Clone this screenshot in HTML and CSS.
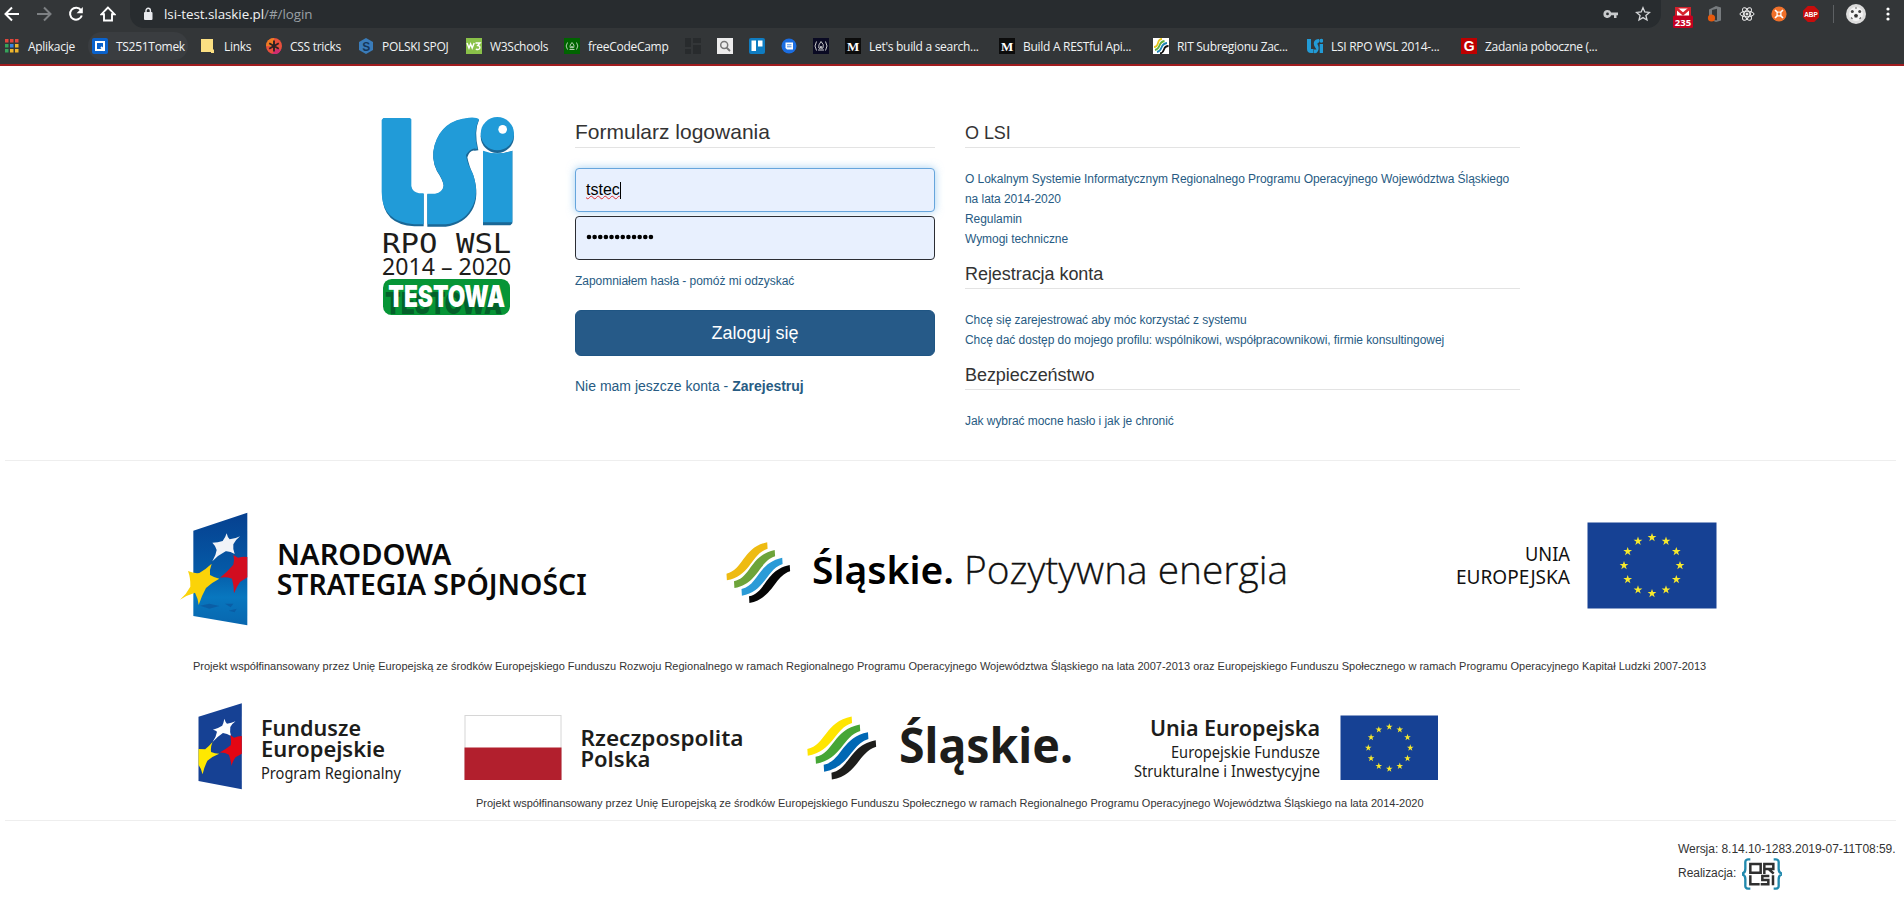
FILE: index.html
```html
<!DOCTYPE html>
<html lang="pl">
<head>
<meta charset="utf-8">
<title>LSI RPO WSL 2014-2020</title>
<link rel="stylesheet" href="styles.css">
</head>
<body>
<svg class="defs" width="0" height="0" aria-hidden="true">
  <defs>
    <path id="star" d="M0-4.600 1.100-1.400 4.400-1.400 1.700.6 2.700 3.800 0 1.800-2.700 3.800-1.700.6-4.400-1.400-1.100-1.400Z"/>
    <g id="ring">
      <use href="#star" x="0" y="-28"/><use href="#star" x="14" y="-24.3"/><use href="#star" x="24.3" y="-14"/>
      <use href="#star" x="28" y="0"/><use href="#star" x="24.3" y="14"/><use href="#star" x="14" y="24.3"/>
      <use href="#star" x="0" y="28"/><use href="#star" x="-14" y="24.3"/><use href="#star" x="-24.3" y="14"/>
      <use href="#star" x="-28" y="0"/><use href="#star" x="-24.3" y="-14"/><use href="#star" x="-14" y="-24.3"/>
    </g>
    <path id="wave" d="M67 191C110 180 108 112 170 97L171 116C130 131 128 198 68 211Z"/>
  </defs>
</svg>

<header class="browser">
  <div class="toolbar">
    <span class="slot"><svg width="16" height="16" viewBox="0 0 16 16"><path d="M15 8H2M8 1.5 1.5 8 8 14.5" fill="none" stroke="#fff" stroke-width="2"/></svg></span>
    <span class="slot"><svg width="16" height="16" viewBox="0 0 16 16"><path d="M1 8h13M8 1.5 14.5 8 8 14.5" fill="none" stroke="#7d8083" stroke-width="2"/></svg></span>
    <span class="slot"><svg width="16" height="16" viewBox="0 0 16 16"><path d="M13 4.2A6 6 0 1 0 13.8 9.500" fill="none" stroke="#fff" stroke-width="2"/><path d="M14.800 1v6.200H8.600Z" fill="#fff"/></svg></span>
    <span class="slot"><svg width="16" height="16" viewBox="0 0 16 16"><path d="M8 1.500 1.500 8.200H4V14.500h8V8.200h2.500Z" fill="none" stroke="#fff" stroke-width="1.900"/></svg></span>
    <div class="omnibox">
      <svg class="lock" width="10" height="14" viewBox="0 0 10 14"><rect x="1" y="5" width="8.500" height="8" rx="1" fill="#e8eaed"/><path d="M3 6V3.500a2.200 2.200 0 0 1 4.400 0V6" fill="none" stroke="#e8eaed" stroke-width="1.400"/></svg>
      <span class="url">lsi-test.slaskie.pl<span class="path">/#/login</span></span>
      <span class="slot push"><svg width="16" height="16" viewBox="0 0 16 16"><path d="M4.500 4a4 4 0 1 0 3.700 5.300H11V12h2.500V9.300H15V6.400H8.200A4 4 0 0 0 4.500 4Zm0 2.500a1.400 1.400 0 1 1 0 2.800 1.400 1.400 0 0 1 0-2.800Z" fill="#c8cacc" fill-rule="evenodd"/></svg></span>
      <span class="slot"><svg width="16" height="16" viewBox="0 0 16 16"><path d="M8 1.700 9.800 6l4.700.4-3.600 3 1.100 4.600L8 11.600 4 14l1.100-4.600-3.600-3L6.200 6Z" fill="none" stroke="#d5d7d9" stroke-width="1.300"/></svg></span>
    </div>
    <span class="slot mail"><svg width="22" height="21" viewBox="0 0 22 21"><rect x="3" y="0" width="16" height="10" fill="#d0202b"/><path d="M5 1.500h12V9H5Z" fill="#fff"/><path d="M4 1 11 7l7-6" fill="none" stroke="#d8232e" stroke-width="2.600"/><rect x="1" y="8.500" width="20" height="12.500" rx="1.500" fill="#c4001f"/><text x="11" y="18.500" text-anchor="middle" class="count">235</text></svg></span>
    <span class="slot"><svg width="16" height="18" viewBox="0 0 16 18"><path d="M2 4.500 9 1l5 1.500v13L9 17l-5-2 6 .2V3.800L5 5v6H2Z" fill="#777b7e"/><circle cx="4.500" cy="13" r="3.600" fill="#e8590c"/></svg></span>
    <span class="slot"><svg width="16" height="16" viewBox="0 0 16 16" fill="none" stroke="#eee" stroke-width="1"><ellipse cx="8" cy="8" rx="7" ry="2.800"/><ellipse cx="8" cy="8" rx="7" ry="2.800" transform="rotate(60 8 8)"/><ellipse cx="8" cy="8" rx="7" ry="2.800" transform="rotate(120 8 8)"/><circle cx="8" cy="8" r="1" fill="#eee"/></svg></span>
    <span class="slot"><svg width="16" height="16" viewBox="0 0 16 16"><circle cx="8" cy="8" r="7.600" fill="#f0702a"/><path d="m4 4 8 8M12 4l-8 8" stroke="#fff" stroke-width="1.600"/><circle cx="8" cy="8" r="2.600" fill="#fff"/><circle cx="8" cy="8" r="1.400" fill="#f0702a"/></svg></span>
    <span class="slot"><svg width="16" height="16" viewBox="0 0 16 16"><path d="M4.800 0h6.400L16 4.800v6.400L11.200 16H4.800L0 11.200V4.800Z" fill="#c70d0c"/><text x="1.200" y="10.800" class="abp" textLength="13.600" lengthAdjust="spacingAndGlyphs">ABP</text></svg></span>
    <span class="rule"></span>
    <span class="slot wide"><svg width="20" height="20" viewBox="0 0 20 20"><circle cx="10" cy="10" r="10" fill="#dcdcdc"/><circle cx="10" cy="10" r="7" fill="#f4f4f4"/><path d="m8 11 2-1.300 2 1.300-.7 2.500H8.700Z" fill="#333"/><circle cx="6.300" cy="7.500" r="1.500" fill="#444"/><circle cx="13.700" cy="7.500" r="1.500" fill="#444"/><path d="M5 13.500l1.500 1.500M15 13.500l-1.500 1.500M9 4h2" stroke="#666" stroke-width="1.200"/></svg></span>
    <span class="slot menu"><svg width="4" height="16" viewBox="0 0 4 16" fill="#fff"><circle cx="2" cy="3" r="1.600"/><circle cx="2" cy="8" r="1.600"/><circle cx="2" cy="13" r="1.600"/></svg></span>
  </div>
  <nav class="bookmarks">
    <a><svg width="16" height="16" viewBox="0 0 16 16"><path d="M1 1h3.500v3.500H1zM6 1h3.500v3.500H6zM11 1h3.500v3.500H11z" fill="#e0473c"/><path d="M1 6h3.500v3.500H1z" fill="#35a35a"/><path d="M6 6h3.500v3.500H6z" fill="#3b83e0"/><path d="M11 6h3.500v3.500H11zM11 11h3.500v3.500H11zM6 11h3.500v3.500H6z" fill="#eeb52c"/><path d="M1 11h3.500v3.500H1z" fill="#35a35a"/></svg><span>Aplikacje</span></a>
    <a class="hover"><svg width="16" height="16" viewBox="0 0 16 16"><rect width="16" height="16" rx="2" fill="#0a62cc"/><path d="M4 4h8v8H4ZM9 9l3.500 3.500" fill="none" stroke="#fff" stroke-width="2"/></svg><span>TS251Tomek</span></a>
    <a><svg width="16" height="16" viewBox="0 0 16 16"><path d="M1 1h12v10l1 1v3H11V14H1Z" fill="#fbdf82"/></svg><span>Links</span></a>
    <a><svg width="16" height="16" viewBox="0 0 16 16"><circle cx="8" cy="8" r="8" fill="#e8503c"/><path d="M8 0a8 8 0 0 0-8 8l8 0Z" fill="#ee7d22"/><path d="M15 12a8 8 0 0 1-9 4l5-6Z" fill="#d02c70"/><path d="M8 2.500v11M3.200 5.200l9.600 5.600M12.800 5.200l-9.600 5.600" stroke="#2d2224" stroke-width="1.900"/></svg><span>CSS tricks</span></a>
    <a><svg width="16" height="16" viewBox="0 0 16 16"><path d="m8 0 7 4v8l-7 4-7-4V4Z" fill="#3a7cba"/><text x="8" y="12.500" text-anchor="middle" class="spoj">S</text></svg><span>POLSKI SPOJ</span></a>
    <a><svg width="16" height="16" viewBox="0 0 16 16"><rect width="16" height="16" fill="#8ac149"/><path d="m1 5 2 5 1.600-4L6.200 10l2-5M9.500 5h4.500l-2.200 2.500q2.600.3 2 2.800-1 2-4 .8" fill="none" stroke="#fff" stroke-width="1.400"/></svg><span>W3Schools</span></a>
    <a><svg width="16" height="16" viewBox="0 0 16 16"><rect width="16" height="16" fill="#006400"/><path d="M3.500 4.500Q.8 8 3.500 11.500M12.500 4.500q2.700 3.500 0 7M5.500 11.500h5M8 4.500q3 2.500 1.800 5L8.600 10 8 8l-.8 2-1.200-.5Q5.500 7 8 4.500Z" fill="none" stroke="#c4dcc0" stroke-width=".9"/></svg><span>freeCodeCamp</span></a>
    <a><svg width="16" height="16" viewBox="0 0 16 16" fill="#282b2d"><path d="M0 0h6v9H0zM8 0h8v5H8zM0 11h6v5H0zM8 7h8v9H8z"/></svg></a>
    <a><svg width="16" height="16" viewBox="0 0 16 16"><rect width="16" height="16" fill="#ececec"/><circle cx="7.200" cy="7" r="3.500" fill="none" stroke="#777" stroke-width="1.500"/><path d="m9.500 9.500 3.500 3.500" stroke="#777" stroke-width="1.800"/></svg></a>
    <a><svg width="16" height="16" viewBox="0 0 16 16"><rect width="16" height="16" rx="2" fill="#0f7cc1"/><path d="M2.500 2.500h4.500v10.500H2.500zM9 2.500h4.500v6H9z" fill="#fff"/></svg></a>
    <a><svg width="16" height="16" viewBox="0 0 16 16"><circle cx="8" cy="8" r="7.500" fill="#1b6de0"/><path d="M4.500 4.500h7.500v7H6L4.500 10Z" fill="#fff"/><path d="M6 6.800h4.500M6 8.800h4.500" stroke="#1b6de0" stroke-width=".8"/></svg></a>
    <a><svg width="16" height="16" viewBox="0 0 16 16"><rect width="16" height="16" fill="#0a0a23"/><path d="M3.500 3.500Q.5 8 3.500 12.500M12.500 3.500q3 4.500 0 9M5 12h6M8 3.500q3.500 3 2 6.500L8.600 10.500 8 8l-.8 2.500-1.400-.5Q5 7 8 3.500Z" fill="none" stroke="#ddd" stroke-width=".9"/></svg></a>
    <a><svg width="16" height="16" viewBox="0 0 16 16"><rect width="16" height="16" fill="#0c0c0c"/><text x="8" y="12.500" text-anchor="middle" class="medium">M</text></svg><span>Let's build a search...</span></a>
    <a><svg width="16" height="16" viewBox="0 0 16 16"><rect width="16" height="16" fill="#0c0c0c"/><text x="8" y="12.500" text-anchor="middle" class="medium">M</text></svg><span>Build A RESTful Api...</span></a>
    <a><svg width="16" height="16" viewBox="0 0 16 16"><rect width="16" height="16" fill="#fff"/><g fill="none" stroke-width="1.800"><path d="M1 9q3 0 4-4t4-4" stroke="#e6c51d"/><path d="M2 12q3-.5 4.500-4.500T11.500 3" stroke="#5fae3b"/><path d="M4 14q3-.5 4.500-4.500T14 5" stroke="#1d83b5"/><path d="M7 15.500q3-.5 4-4T15.500 8" stroke="#111"/></g></svg><span>RIT Subregionu Zac...</span></a>
    <a><svg width="16" height="16" viewBox="0 0 16 16" fill="#229bd6"><path d="M0 1h4v10h2.500v4H4q-4 0-4-4Z"/><path d="M7 11.500h2.500Q6 7 7 4t5-3v3.500q-2 0-1.500 1.800Q12.500 10 11 13t-4 2Z"/><path d="M12.700 6H16v9h-3.300z"/><circle cx="14.300" cy="2.800" r="2"/></svg><span>LSI RPO WSL 2014-...</span></a>
    <a><svg width="16" height="16" viewBox="0 0 16 16"><rect width="16" height="16" fill="#bd0000"/><text x="8" y="13" text-anchor="middle" class="gsite">G</text></svg><span>Zadania poboczne (...</span></a>
  </nav>
</header>

<main class="login">
  <svg class="brand" width="180" height="230" viewBox="0 0 540 690">
    <g fill="#1a6796"><path d="M68 58H153V262Q155 280 177 282H191V379H163Q68 374 67 286Z"/><path d="M202 283H225Q248 280 251 258Q249 240 231 214Q212 176 224 136Q246 62 327 55Q350 53 357 60Q341 94 355 151L344 152Q329 150 322 172Q326 195 340 226Q360 288 336 331Q310 374 257 380H202Z"/><path d="M369 154Q410 170 457 152V370L451 376H369Z"/><circle cx="412" cy="109" r="50"/></g>
    <g fill="#219bd8"><path d="M70 54H150L154 58V258Q157 276 177 280H191V373H163Q65 366 65 276V60Z"/><path d="M202 281H225Q248 278 251 256Q249 238 231 212Q212 174 224 134Q246 60 327 53Q350 51 357 58Q339 94 352 147Q333 140 318 165Q321 190 338 220Q360 282 334 325Q310 368 257 373H202Z"/><path d="M369 152Q410 168 457 152V367H369Z"/><circle cx="412" cy="101" r="50"/></g>
    <circle cx="428" cy="88" r="13" fill="#fff"/>
    <g fill="#1d1d1b">
      <text x="66" y="459" class="rpo" textLength="388" lengthAdjust="spacingAndGlyphs">RPO WSL</text>
      <text x="66" y="524" class="years" textLength="388" lengthAdjust="spacingAndGlyphs">2014 – 2020</text>
    </g>
    <rect x="69" y="537" width="381" height="108" rx="26" fill="#069536"/>
    <text x="85" y="620" class="test" textLength="350" lengthAdjust="spacingAndGlyphs">TESTOWA</text>
  </svg>

  <form class="signin">
    <h1>Formularz logowania</h1>
    <div class="field focus"><span class="typed">tstec</span><span class="caret"></span></div>
    <div class="field secret"><svg width="68" height="6" viewBox="0 0 68 6"><path d="M3 3H66" stroke="#000" stroke-width="4.600" stroke-linecap="round" stroke-dasharray="0 5.630"/></svg></div>
    <a class="forgot">Zapomniałem hasła - pomóż mi odzyskać</a>
    <button type="button">Zaloguj się</button>
    <a class="register">Nie mam jeszcze konta - <b>Zarejestruj</b></a>
  </form>

  <div class="info">
    <section>
      <h2>O LSI</h2>
      <a>O Lokalnym Systemie Informatycznym Regionalnego Programu Operacyjnego Województwa Śląskiego na lata 2014-2020</a>
      <a>Regulamin</a>
      <a>Wymogi techniczne</a>
    </section>
    <section>
      <h2>Rejestracja konta</h2>
      <a>Chcę się zarejestrować aby móc korzystać z systemu</a>
      <a>Chcę dać dostęp do mojego profilu: wspólnikowi, współpracownikowi, firmie konsultingowej</a>
    </section>
    <section>
      <h2>Bezpieczeństwo</h2>
      <a>Jak wybrać mocne hasło i jak je chronić</a>
    </section>
  </div>
</main>

<div class="partners">
  <div class="logos first">
    <svg width="460" height="140" viewBox="0 0 1380 420">
      <defs><linearGradient id="sky" x1="0" y1="0" x2="0" y2="1"><stop offset="0" stop-color="#06408f"/><stop offset=".5" stop-color="#0559a6"/><stop offset=".75" stop-color="#0877bf"/><stop offset="1" stop-color="#0866ae"/></linearGradient></defs>
      <path d="M100 122 262 68V406L100 378Z" fill="url(#sky)"/>
      <path d="M200 130Q202 141 209 148Q225 147 240 139Q225 151 220 163Q218 177 224 192Q210 183 197 184Q175 195 157 214Q168 196 170 180Q166 166 157 158Q174 158 188 153Q196 143 200 130Z" fill="#f0f3f8"/>
      <path d="M262 201Q248 199 234 203L220 195Q224 210 220 224Q201 246 180 263Q200 260 216 266Q222 288 222 310Q229 292 240 276L262 262Z" fill="#d20d20"/>
      <path d="M155 221Q148 239 150 255Q163 263 178 266Q156 277 138 294Q124 319 116 345Q114 325 105 308Q81 315 60 329Q79 313 91 290Q92 264 84 243Q101 251 118 249Q138 237 155 221Z" fill="#fbd308"/>
      <path d="M120 347 148 341 178 348 148 356ZM195 341H220L212 352ZM206 362 230 356 224 367Z" fill="#0b559c" opacity=".7"/>
      <g class="nss"><text x="351" y="226" textLength="523" lengthAdjust="spacingAndGlyphs">NARODOWA</text><text x="350" y="314" textLength="930" lengthAdjust="spacingAndGlyphs">STRATEGIA SPÓJNOŚCI</text></g>
    </svg>
    <svg width="620" height="130" viewBox="0 0 620 130">
      <g transform="translate(0 20) scale(.3953 .3333)"><use href="#wave" fill="#eebb12"/><use href="#wave" x="19" y="23" fill="#6da43a"/><use href="#wave" x="38" y="46" fill="#2a9bd7"/><use href="#wave" x="57" y="68" fill="#050505"/></g>
      <text x="112" y="94" class="sl1" textLength="142" lengthAdjust="spacingAndGlyphs">Śląskie.</text>
      <text x="264" y="94" class="energy" textLength="324" lengthAdjust="spacingAndGlyphs">Pozytywna energia</text>
    </svg>
    <svg width="320" height="130" viewBox="0 0 320 130">
      <g class="ue1"><text x="105" y="71" textLength="45" lengthAdjust="spacingAndGlyphs">UNIA</text><text x="36" y="94" textLength="114" lengthAdjust="spacingAndGlyphs">EUROPEJSKA</text></g>
      <rect x="167.500" y="32.500" width="129" height="86" fill="#164194"/>
      <use href="#ring" transform="translate(232 75.500)" fill="#f7e92d"/>
    </svg>
  </div>
  <p class="caption c1">Projekt współfinansowany przez Unię Europejską ze środków Europejskiego Funduszu Rozwoju Regionalnego w ramach Regionalnego Programu Operacyjnego Województwa Śląskiego na lata 2007-2013 oraz Europejskiego Funduszu Społecznego w ramach Programu Operacyjnego Kapitał Ludzki 2007-2013</p>
  <div class="logos second">
    <svg width="240" height="100" viewBox="0 0 240 100">
      <g transform="scale(.37 .3333)">
        <path d="M50 80 167 40V298L50 273Z" fill="#164194"/>
        <path d="M120 86Q122 95 127 101Q139 99 150 94Q140 102 136 111Q134 125 138 138Q127 130 116 129Q101 140 88 156Q98 140 100 125Q96 120 89 119Q103 115 114 107Q118 98 120 86Z" fill="#fff"/>
        <path d="M167 138Q156 138 146 143L136 135Q139 152 137 166Q122 180 106 188Q121 187 132 194Q138 211 139 228Q142 214 150 202L167 191Z" fill="#e30613"/>
        <path d="M50 177 68 178Q79 168 88 156Q82 171 84 186Q94 191 106 191Q87 199 74 212Q65 232 61 253Q58 236 50 224Z" fill="#ffe800"/>
      </g>
      <g class="fe"><text x="81" y="45.500" textLength="100" lengthAdjust="spacingAndGlyphs">Fundusze</text><text x="81" y="67" textLength="124" lengthAdjust="spacingAndGlyphs">Europejskie</text></g>
      <text x="81" y="89" class="fes" textLength="140" lengthAdjust="spacingAndGlyphs">Program Regionalny</text>
    </svg>
    <svg width="310" height="100" viewBox="0 0 310 100">
      <rect x="15" y="25.500" width="96" height="64" fill="#fff" stroke="#d6d6d6"/><path d="M14.500 57.500h97V90h-97Z" fill="#b21f2d"/>
      <g class="rp"><text x="130.500" y="55.500" textLength="163" lengthAdjust="spacingAndGlyphs">Rzeczpospolita</text><text x="130.500" y="77" textLength="70" lengthAdjust="spacingAndGlyphs">Polska</text></g>
    </svg>
    <svg width="300" height="100" viewBox="0 0 300 100">
      <g transform="translate(-2 -7) scale(.43 .345)"><use href="#wave" x="-22" fill="#ffe500"/><use href="#wave" x="-3" y="23" fill="#46a636"/><use href="#wave" x="16" y="46" fill="#0068b4"/><use href="#wave" x="34" y="69" fill="#1d1d1b"/></g>
      <text x="109" y="73" class="sl2" textLength="174" lengthAdjust="spacingAndGlyphs">Śląskie.</text>
    </svg>
    <svg width="340" height="100" viewBox="0 0 340 100">
      <text x="30" y="45.500" class="ue2" textLength="170" lengthAdjust="spacingAndGlyphs">Unia Europejska</text>
      <g class="ues"><text x="51" y="67.500" textLength="149" lengthAdjust="spacingAndGlyphs">Europejskie Fundusze</text><text x="14" y="86.500" textLength="186" lengthAdjust="spacingAndGlyphs">Strukturalne i Inwestycyjne</text></g>
      <rect x="220.500" y="25.500" width="97.500" height="64.500" fill="#164194"/>
      <use href="#ring" transform="translate(269.300 57.800) scale(.75)" fill="#f7e92d"/>
    </svg>
  </div>
  <p class="caption c2">Projekt współfinansowany przez Unię Europejską ze środków Europejskiego Funduszu Społecznego w ramach Regionalnego Programu Operacyjnego Województwa Śląskiego na lata 2014-2020</p>
</div>

<footer>
  <div>Wersja: 8.14.10-1283.2019-07-11T08:59.</div>
  <div class="made">Realizacja:
    <svg width="40" height="32" viewBox="0 0 120 96" fill="none">
      <path d="M25 4H18Q9 4 10 16V32Q10 44 2 46V50Q10 52 10 64V80Q9 92 18 92H25M95 4h7q9 0 8 12V32q0 12 8 14v4q-8 2-8 14V80q1 12-8 12H95" stroke="#2189ad" stroke-width="7"/>
      <path d="M25 18H56V44H25ZM67 48V18H94V33H67M80 33 95 47M25 52V79H53M82 54H61V66H79V79H56M93 52V82" stroke="#2f2f2f" stroke-width="7.500"/>
    </svg>
  </div>
</footer>
</body>
</html>
```

FILE: styles.css
```css
* { box-sizing: border-box; }
body {
  margin: 0;
  height: 909px;
  overflow: hidden;
  background: #fff;
  color: #333;
  font-family: "Liberation Sans", Arial, sans-serif;
}
svg { display: block; flex: none; }
.defs { height: 0; }
a { color: #275b83; }

.browser {
  height: 66px;
  background: #333638;
  border-bottom: 2px solid #a01c1f;
  font-family: "Open Sans", "Noto Sans", sans-serif;
}
.toolbar {
  display: flex;
  align-items: center;
  height: 28px;
  margin-left: -4px;
}
.slot {
  flex: none;
  display: flex;
  justify-content: center;
  width: 32px;
}
.slot.wide { width: 44px; }
.slot.menu { margin-left: -6px; }
.slot.mail { align-self: flex-end; }
.omnibox {
  display: flex;
  flex: none;
  align-items: center;
  width: 1531px;
  height: 28px;
  margin: 0 6px;
  padding: 0 2px 0 13px;
  background: #282c2f;
  border-radius: 0 0 14px 14px;
}
.url {
  margin-left: 11px;
  color: #f1f3f4;
  font-size: 13.4px;
  letter-spacing: -0.05px;
  white-space: nowrap;
}
.path { color: #9aa0a6; }
.push { margin-left: auto; }
.rule {
  flex: none;
  width: 1px;
  height: 18px;
  margin: 0 0 0 6px;
  background: #5d6063;
}
.count { font: bold 9.500px "Open Sans", sans-serif; fill: #fff; }
.abp { font: bold 7.500px "Liberation Sans", sans-serif; fill: #fff; }

.bookmarks {
  display: grid;
  grid-template-columns: 88px 108px 66px 92px 108px 98px 121px 32px 32px 32px 32px 32px 154px 154px 154px 154px 180px;
  align-items: center;
  height: 36px;
  padding-left: 4px;
}
.bookmarks a {
  display: flex;
  align-items: center;
  gap: 8px;
  color: #f1f3f4;
  font-size: 12px;
  letter-spacing: -0.29px;
  white-space: nowrap;
}
.bookmarks .hover {
  width: 100px;
  height: 28px;
  margin-left: -4px;
  padding-left: 4px;
  border-radius: 14px;
  background: #3a3d40;
}
.spoj { font: bold 12px "Liberation Sans", sans-serif; fill: #14365a; }
.medium { font: bold 13px "Liberation Serif", serif; fill: #fff; }
.gsite { font: bold 14px "Liberation Sans", sans-serif; fill: #fff; }

.login {
  display: flex;
  align-items: flex-start;
  height: 395px;
  margin: 0 8px 0 5px;
  padding: 34px 0 0 355px;
  border-bottom: 1px solid #eee;
}
.signin {
  display: flex;
  flex-direction: column;
  width: 360px;
  margin: 20px 0 0 35px;
}
h1, h2 {
  margin: 0;
  border-bottom: 1px solid #e3e3e3;
  font-weight: normal;
  color: #333;
}
h1 { height: 28px; margin-bottom: 20px; font-size: 21px; line-height: 24px; }
.field {
  display: flex;
  align-items: center;
  height: 44px;
  margin-bottom: 4px;
  padding: 0 10px;
  border: 1px solid #2b2d33;
  border-radius: 4px;
  background: #e8f0fe;
  color: #000;
  font-size: 16px;
}
.field.focus {
  border-color: #66a5dc;
  box-shadow: 0 0 8px rgba(102, 175, 233, .6);
}
.typed { text-decoration: underline wavy #e03030 1px; text-underline-offset: 0; text-decoration-skip-ink: none; }
.caret { width: 1px; height: 17px; background: #000; }
.secret { padding-bottom: 2px; }
.forgot { margin-top: 8px; font-size: 12px; line-height: 18px; letter-spacing: -0.04px; }
button {
  height: 46px;
  margin: 20px 0;
  padding: 0;
  border: 1px solid #1f5583;
  border-radius: 6px;
  background: #265a88;
  color: #fff;
  font: 18px "Liberation Sans", Arial, sans-serif;
}
.register { font-size: 14px; line-height: 20px; }

.info { width: 555px; margin: 20px 0 0 30px; }
section { margin-bottom: 10px; }
h2 { height: 28px; margin-bottom: 21px; padding-top: 3px; font-size: 18px; line-height: 21px; letter-spacing: -0.05px; }
section a { display: block; font-size: 12px; line-height: 20px; letter-spacing: -0.05px; }
section + section { padding-top: 2px; }

.partners {
  height: 360px;
  margin: 0 8px 0 5px;
  border-bottom: 1px solid #eee;
}
.logos { display: flex; }
.first { gap: 0 80px; padding: 29px 0 0 155px; }
.first svg:last-child { margin-left: 20px; }
.second { gap: 30px; padding: 15px 0 0 175px; }
.caption {
  margin: 0;
  font-size: 11px;
  line-height: 18px;
  white-space: nowrap;
}
.c1 { margin: 27px 0 0 188px; }
.c2 { margin: 4px 0 0 471px; }

.rpo { font: 82px "DejaVu Sans Mono", monospace; }
.years { font: 68px "Noto Sans", sans-serif; }
.test { font: 900 90px Inter, Roboto, sans-serif; fill: #fff; text-shadow: -4px 7px 0 #04602a; }
.nss { font: 600 88px "Noto Sans", sans-serif; fill: #0a0a0a; }
.sl1 { font: 600 38px "Noto Sans", sans-serif; }
.energy { font: 300 38px "Open Sans", sans-serif; fill: #111; stroke: #111; stroke-width: .3; }
.ue1 { font: 20px "Noto Sans", sans-serif; fill: #111; }
.fe, .rp, .ue2 { font: 600 22px "Noto Sans", sans-serif; fill: #1d1d1b; }
.fes, .ues { font: 15.500px "Noto Sans", sans-serif; fill: #1d1d1b; }
.sl2 { font: bold 48px "Noto Sans", sans-serif; fill: #1d1d1b; }

footer {
  width: 218px;
  margin: 16px 8px 0 auto;
  font-size: 12px;
  line-height: 24px;
  letter-spacing: -0.04px;
  white-space: nowrap;
}
.made { display: flex; gap: 6px; }
.made svg { margin-top: -3px; }
```
